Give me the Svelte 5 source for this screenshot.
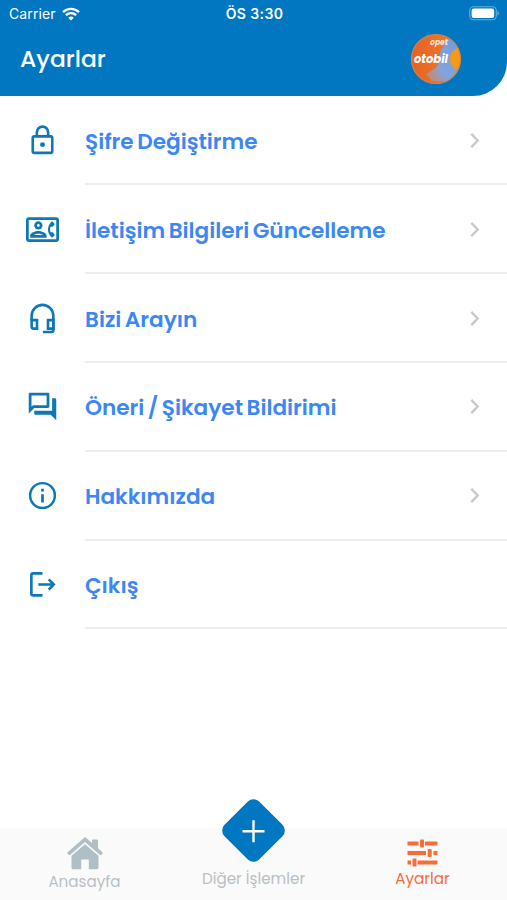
<script>
  const items = [
    { icon: "lock", label: "Şifre Değiştirme", arrow: true },
    { icon: "contact", label: "İletişim Bilgileri Güncelleme", arrow: true },
    { icon: "headset", label: "Bizi Arayın", arrow: true },
    { icon: "forum", label: "Öneri / Şikayet Bildirimi", arrow: true },
    { icon: "info", label: "Hakkımızda", arrow: true },
    { icon: "logout", label: "Çıkış", arrow: false },
  ];
</script>

<div class="screen">
  <header>
    <div class="status">
      <div class="carrier">
        <span>Carrier</span>
        <svg width="18" height="14" viewBox="0 0 18 14" fill="none" stroke="#fff" stroke-width="2.4">
          <path d="M1 5.2a11.4 11.4 0 0 1 16 0" />
          <path d="M3.9 8.2a7.2 7.2 0 0 1 10.2 0" />
          <path d="M9 13.6 6.3 10.8a3.9 3.9 0 0 1 5.4 0z" fill="#fff" stroke="none" />
        </svg>
      </div>
      <span class="time">ÖS 3:30</span>
      <svg class="battery" width="31" height="15" viewBox="0 0 31 15">
        <rect x="0.7" y="0.8" width="26.6" height="13" rx="4" fill="none" stroke="#fff" stroke-opacity=".4" stroke-width="1.1" />
        <rect x="2.6" y="2.6" width="22.6" height="9.4" rx="2.2" fill="#fff" />
        <path d="M28.5 5v4.6c1.8-.7 1.8-3.9 0-4.6z" fill="#fff" fill-opacity=".45" />
      </svg>
    </div>
    <div class="title">
      <h1>Ayarlar</h1>
      <svg class="logo" width="52" height="52" viewBox="0 0 52 52">
        <defs>
          <clipPath id="ball"><circle cx="26" cy="26" r="24.5" /></clipPath>
          <linearGradient id="orange" x1="0" y1="0" x2="1" y2="0">
            <stop offset="0" stop-color="#ea5f20" />
            <stop offset="1" stop-color="#e98334" />
          </linearGradient>
          <linearGradient id="sky" x1="1" y1="0" x2="0" y2="1">
            <stop offset="0" stop-color="#6f9be0" />
            <stop offset=".65" stop-color="#83a4dc" />
            <stop offset="1" stop-color="#d8824e" />
          </linearGradient>
        </defs>
        <g clip-path="url(#ball)">
          <rect width="52" height="52" fill="url(#orange)" />
          <path d="M37 7c-4 7-8 12-7 17 1 7-4 12-14 17l6 7h18l12-14V14L44 7z" fill="url(#sky)" />
          <path d="M52 14c-8 0-12 6-12 12s4 11 12 14z" fill="#f39a18" />
        </g>
        <circle cx="26" cy="26" r="24.5" fill="none" stroke="#d88342" stroke-width="1.2" />
        <text x="20" y="12" textLength="18" lengthAdjust="spacingAndGlyphs" class="logo-top">opet</text>
        <text x="4" y="30" textLength="34" lengthAdjust="spacingAndGlyphs" class="logo-name">otobil</text>
      </svg>
    </div>
  </header>

  <ul>
    {#each items as item}
      <li>
        <span class="icon">
          <svg width="33" height="33" viewBox="0 0 24 24" fill="currentColor">
            {#if item.icon === "lock"}
              <g fill="none" stroke="currentColor" stroke-width="1.9">
                <rect x="4.9" y="9" width="14.2" height="12" rx="1.2" />
                <path d="M7.9 9V6a4.1 4.1 0 0 1 8.2 0v3" />
              </g>
              <circle cx="12" cy="15" r="1.8" />
            {:else if item.icon === "contact"}
              <path d="M22 3H2C.9 3 0 3.9 0 5v14c0 1.1.9 2 2 2h20c1.1 0 1.99-.9 1.99-2L24 5c0-1.1-.9-2-2-2zm0 16H2V5h20v14zm-2.99-1.01L21 16l-1.51-2h-1.64c-.22-.63-.35-1.3-.35-2s.13-1.37.35-2h1.64L21 8l-1.99-1.99c-1.31.98-2.28 2.37-2.73 3.99-.18.64-.28 1.31-.28 2s.1 1.36.28 2c.45 1.61 1.42 3.01 2.73 3.99zM9 12c1.65 0 3-1.35 3-3s-1.35-3-3-3-3 1.35-3 3 1.35 3 3 3zm0-4c.55 0 1 .45 1 1s-.45 1-1 1-1-.45-1-1 .45-1 1-1zm6 8.59c0-2.5-3.97-3.58-6-3.58s-6 1.08-6 3.58V18h12v-1.41zM5.48 16c.74-.5 2.22-1 3.52-1s2.77.49 3.52 1H5.48z" />
            {:else if item.icon === "headset"}
              <g fill="none" stroke="currentColor" stroke-width="1.9">
                <path d="M8 13.2H4.1v4.7a1.5 1.5 0 0 0 1.5 1.5H8zM16 13.2h3.9v6.2H16z" />
                <path d="M4.1 13.5V10a7.9 7.9 0 0 1 15.8 0v10.4a1.4 1.4 0 0 1-1.4 1.4H12.3" />
              </g>
            {:else if item.icon === "forum"}
              <path d="M15 4v7H5.17L4 12.17V4h11m1-2H3c-.55 0-1 .45-1 1v14l4-4h10c.55 0 1-.45 1-1V3c0-.55-.45-1-1-1zm5 4h-2v9H6v2c0 .55.45 1 1 1h11l4 4V7c0-.55-.45-1-1-1z" />
            {:else if item.icon === "info"}
              <circle cx="12" cy="12" r="9" fill="none" stroke="currentColor" stroke-width="1.8" />
              <path d="M11 11h2v6h-2zM11 7.1h2v2h-2z" />
            {:else}
              <path d="M12 3.9H5.3a1.4 1.4 0 0 0-1.4 1.4v13.2a1.4 1.4 0 0 0 1.4 1.4H12M9 12h11M16.5 8.3l3.7 3.7-3.7 3.7" fill="none" stroke="currentColor" stroke-width="1.9" />
            {/if}
          </svg>
        </span>
        <a href="#{item.icon}">
          <span>{item.label}</span>
          {#if item.arrow}
            <svg width="10" height="16" viewBox="0 0 10 16" fill="none" stroke="#c7c9cc" stroke-width="2.4">
              <path d="m1.3 1.9 6.4 6.6-6.4 6.6" />
            </svg>
          {/if}
        </a>
      </li>
    {/each}
  </ul>

  <nav>
    <a href="#home" class="home">
      <svg width="36" height="33" viewBox="0 0 36 33" fill="#b0bec5">
        <path d="M18 0 .6 15.2a1.2 1.2 0 0 0 0 1.5l1 1.1a1 1 0 0 0 1.4.1L18 5l15 12.9a1 1 0 0 0 1.4-.1l1-1.1a1.2 1.2 0 0 0 0-1.5L31 11.3V3.6a1 1 0 0 0-1-1h-4a1 1 0 0 0-1 1v2.5z" />
        <path d="M18 7.2 4.5 18.8v12a1.4 1.4 0 0 0 1.4 1.4h8.3V22.6h7.6v9.6h8.3a1.4 1.4 0 0 0 1.4-1.4v-12z" />
      </svg>
      <span>Anasayfa</span>
    </a>
    <a href="#more" class="more">
      <i class="diamond">
        <svg width="24" height="24" viewBox="0 0 24 24" stroke="#fff" stroke-width="2.4">
          <path d="M12 1v22M1 12h22" />
        </svg>
      </i>
      <span>Diğer İşlemler</span>
    </a>
    <a href="#settings" class="settings">
      <svg width="31" height="28" viewBox="0 0 31 28" fill="#f96b37">
        <path d="M.5 2.5h11v4H.5zM18 2.5h12.5v4H18zM.5 12H19v4H.5zM26.5 12h4v4h-4zM.5 21.5H4v4H.5zM10.500 21.500h20v4h-20z" />
        <rect x="13" y=".5" width="4" height="8" rx="1" />
        <rect x="20.7" y="10" width="4" height="8" rx="1" />
        <rect x="5.5" y="19.5" width="4" height="8" rx="1" />
      </svg>
      <span>Ayarlar</span>
    </a>
  </nav>
</div>

<style>
  :global(body) {
    margin: 0;
    background-color: #fff;
  }

  .screen {
    display: flex;
    flex-direction: column;
    height: 900px;
    overflow: hidden;
    font-family: Poppins, Inter, "Open Sans", sans-serif;
  }

  header {
    height: 96px;
    flex: none;
    background-color: #0077c0;
    border-bottom-right-radius: 34px;
    color: #fff;
  }

  .status {
    display: grid;
    grid-template-columns: 1fr auto 1fr;
    align-items: center;
    height: 27px;
    padding: 0 7px 0 9px;
    font-family: Inter, sans-serif;
    font-size: 14px;
  }

  .carrier {
    display: flex;
    align-items: center;
    gap: 6px;
    letter-spacing: 0.1px;
  }

  .time {
    font-weight: 600;
    letter-spacing: 0.4px;
  }

  .battery {
    justify-self: end;
  }

  .title {
    display: flex;
    justify-content: space-between;
    align-items: center;
    height: 64px;
    padding: 0 45px 0 20px;
  }

  h1 {
    margin: 0 0 1px;
    font-size: 23.4px;
    font-weight: 500;
  }

  .logo text {
    fill: #fff;
    font-weight: 700;
    font-style: italic;
  }

  .logo .logo-top {
    font-size: 8px;
    fill-opacity: 0.8;
  }

  .logo .logo-name {
    font-size: 12.5px;
  }

  ul {
    flex: 1;
    margin: 0;
    padding: 0.7px 0 0;
    list-style: none;
  }

  li {
    display: flex;
    height: 88.8px;
  }

  .icon {
    display: flex;
    align-items: center;
    justify-content: center;
    width: 85px;
    padding-bottom: 1px;
    color: #0c78b8;
  }

  a {
    color: inherit;
    text-decoration: none;
  }

  li a {
    flex: 1;
    display: flex;
    align-items: center;
    justify-content: space-between;
    box-sizing: border-box;
    padding-right: 27px;
    border-bottom: 2px solid #ededee;
    color: #3c87f4;
    font-size: 21.6px;
    font-weight: 600;
    word-spacing: -1.6px;
    white-space: nowrap;
  }

  li a span {
    padding-top: 3px;
  }

  nav {
    display: grid;
    grid-template-columns: repeat(3, 1fr);
    flex: none;
    height: 72px;
    background-color: #fafafa;
    color: #b9bfc3;
    font-size: 15.2px;
  }

  nav a {
    display: flex;
    flex-direction: column;
    align-items: center;
    line-height: 20px;
  }

  .home {
    padding-top: 9px;
  }

  .home span {
    margin-top: 2px;
  }

  .diamond {
    display: flex;
    align-items: center;
    justify-content: center;
    width: 49px;
    height: 49px;
    margin-top: -22.5px;
    border-radius: 8px;
    background-color: #0077c0;
    transform: rotate(45deg);
  }

  .diamond svg {
    transform: rotate(45deg);
  }

  .more span {
    margin-top: 14px;
  }

  .settings {
    padding-top: 11px;
    color: #f96b37;
  }

  .settings span {
    margin-top: 2px;
  }
</style>
